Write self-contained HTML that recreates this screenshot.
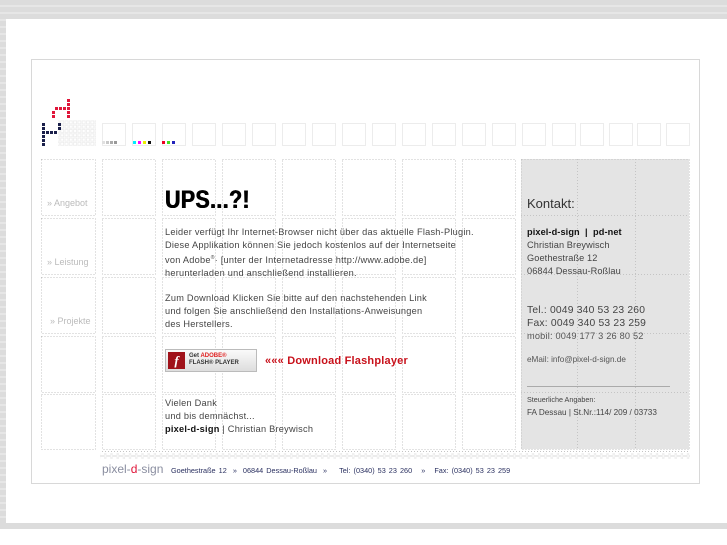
<!DOCTYPE html>
<html><head><meta charset="utf-8"><style>
body{margin:0;width:727px;height:545px;overflow:hidden;background:#fff;font-family:"Liberation Sans",sans-serif;position:relative}
.a{position:absolute;white-space:nowrap}
.t{font-size:9.2px;letter-spacing:0.25px;color:#444;line-height:13px}
</style></head><body>
<div class="a" style="left:0;top:0;width:727px;height:19px;background:repeating-linear-gradient(#dcdcdc 0 5px,#e6e6e6 5px 7px)"></div>
<div class="a" style="left:0;top:0;width:6px;height:523px;background:repeating-linear-gradient(#dcdcdc 0 5px,#e6e6e6 5px 7px)"></div>
<div class="a" style="left:0;top:523px;width:727px;height:6px;background:#dcdcdc"></div>
<div class="a" style="left:31px;top:59px;width:667px;height:423px;border:1px solid #d8d8d8"></div>
<div class="a" style="left:521px;top:159px;width:168px;height:290px;background:#e4e4e4"></div>
<svg class="a" style="left:0;top:0" width="727" height="545">
<g fill="none" stroke="#c4c4c4" stroke-dasharray="1 2">
<rect x="41.5" y="159.5" width="54" height="56"/><rect x="41.5" y="218.5" width="54" height="56"/><rect x="41.5" y="277.5" width="54" height="56"/><rect x="41.5" y="336.5" width="54" height="56"/><rect x="41.5" y="394.5" width="54" height="55"/>
<g id="c"><rect x="102.5" y="159.5" width="53" height="56"/><rect x="102.5" y="218.5" width="53" height="56"/><rect x="102.5" y="277.5" width="53" height="56"/><rect x="102.5" y="336.5" width="53" height="56"/><rect x="102.5" y="394.5" width="53" height="55"/></g>
<use href="#c" x="60"/><use href="#c" x="120"/><use href="#c" x="180"/><use href="#c" x="240"/><use href="#c" x="300"/><use href="#c" x="360"/>
<rect x="521.5" y="159.5" width="168" height="290"/>
<line x1="577.5" y1="159" x2="577.5" y2="449"/><line x1="635.5" y1="159" x2="635.5" y2="449"/>
<line x1="521" y1="215.5" x2="689" y2="215.5"/><line x1="521" y1="274.5" x2="689" y2="274.5"/><line x1="521" y1="333.5" x2="689" y2="333.5"/><line x1="521" y1="392.5" x2="689" y2="392.5"/>
<line x1="102" y1="451.5" x2="689" y2="451.5"/>
</g>
<g fill="none" stroke="#ececec">
<rect x="102.5" y="123.5" width="23" height="22"/><g id="s"><rect x="132.5" y="123.5" width="23" height="22"/></g>
<use href="#s" x="30"/><use href="#s" x="60"/><use href="#s" x="90"/><use href="#s" x="120"/><use href="#s" x="150"/><use href="#s" x="180"/><use href="#s" x="210"/><use href="#s" x="240"/><use href="#s" x="270"/><use href="#s" x="300"/><use href="#s" x="330"/><use href="#s" x="360"/><use href="#s" x="390"/><use href="#s" x="420"/><use href="#s" x="448"/><use href="#s" x="477"/><use href="#s" x="505"/><use href="#s" x="534"/>
</g>
<g>
<rect x="102" y="141" width="3" height="3" fill="#e0e0e0"/><rect x="106" y="141" width="3" height="3" fill="#c8c8c8"/><rect x="110" y="141" width="3" height="3" fill="#aaa"/><rect x="114" y="141" width="3" height="3" fill="#999"/>
<rect x="133" y="141" width="3" height="3" fill="#0ef"/><rect x="138" y="141" width="3" height="3" fill="#f0f"/><rect x="143" y="141" width="3" height="3" fill="#ee0"/><rect x="148" y="141" width="3" height="3" fill="#111"/>
<rect x="162" y="141" width="3" height="3" fill="#e02"/><rect x="167" y="141" width="3" height="3" fill="#4d2"/><rect x="172" y="141" width="3" height="3" fill="#22b"/>
</g>
<defs><pattern id="gp" width="4.3" height="4.3" patternUnits="userSpaceOnUse"><rect x="0.5" y="0.5" width="3" height="3" fill="none" stroke="#ececec" stroke-width="0.8"/></pattern>
<pattern id="fp" width="6.2" height="6" patternUnits="userSpaceOnUse"><rect x="0.5" y="0.5" width="5" height="5" rx="1" fill="none" stroke="#ececec"/></pattern></defs>
<rect x="58" y="120" width="38" height="26" fill="url(#gp)"/>
<rect x="100" y="453" width="590" height="6" fill="url(#fp)"/>
<g fill="#e0163a">
<rect x="67" y="99" width="3" height="3"/><rect x="67" y="103" width="3" height="3"/><rect x="67" y="107" width="3" height="3"/><rect x="67" y="111" width="3" height="3"/><rect x="67" y="115" width="3" height="3"/>
<rect x="63" y="107" width="3" height="3"/><rect x="59" y="107" width="3" height="3"/><rect x="55" y="107" width="3" height="3"/><rect x="52" y="111" width="3" height="3"/><rect x="52" y="115" width="3" height="3"/>
</g>
<g fill="#1a1f4a">
<rect x="42" y="123" width="3" height="3"/><rect x="42" y="127" width="3" height="3"/><rect x="42" y="131" width="3" height="3"/><rect x="42" y="135" width="3" height="3"/><rect x="42" y="139" width="3" height="3"/><rect x="42" y="143" width="3" height="3"/>
<rect x="46" y="131" width="3" height="3"/><rect x="50" y="131" width="3" height="3"/><rect x="54" y="131" width="3" height="3"/><rect x="58" y="127" width="3" height="3"/><rect x="58" y="123" width="3" height="3"/>
</g>
</svg>
<div class="a" style="left:47px;top:198px;font-size:9px;color:#bbb">» Angebot</div>
<div class="a" style="left:47px;top:257px;font-size:9px;color:#bbb">» Leistung</div>
<div class="a" style="left:50px;top:316px;font-size:9px;color:#bbb">» Projekte</div>
<div class="a" style="left:165px;top:186px;font-size:25px;font-weight:bold;color:#000;letter-spacing:0.5px;transform:scaleX(0.85);transform-origin:left;text-shadow:0.6px 0 0 #000,-0.3px 0 0 #000">UPS...?!</div>
<div class="a t" style="left:165px;top:226px">Leider verfügt Ihr Internet-Browser nicht über das aktuelle Flash-Plugin.<br>Diese Applikation können Sie jedoch kostenlos auf der Internetseite<br>von Adobe<sup style="font-size:5px">®</sup>· [unter der Internetadresse http://www.adobe.de]<br>herunterladen und anschließend installieren.</div>
<div class="a t" style="left:165px;top:292px">Zum Download Klicken Sie bitte auf den nachstehenden Link<br>und folgen Sie anschließend den Installations-Anweisungen<br>des Herstellers.</div>
<div class="a" style="left:165px;top:349px;width:90px;height:21px;border:1px solid #bbb;background:linear-gradient(#fafafa,#ddd)">
<div class="a" style="left:2px;top:2px;width:17px;height:17px;background:#a0121a;color:#fff;font:italic bold 13px 'Liberation Serif',serif;text-align:center;line-height:17px">f</div>
<div class="a" style="left:23px;top:3px;font-size:6px;font-weight:bold;color:#333;line-height:7px">Get <span style="color:#e02020">ADOBE®</span><br>FLASH® PLAYER</div></div>
<div class="a" style="left:265px;top:355px;font-size:11px;font-weight:bold;color:#c8101a;letter-spacing:0.2px">««« Download Flashplayer</div>
<div class="a t" style="left:165px;top:397px">Vielen Dank<br>und bis demnächst...<br><b style="color:#111">pixel-d-sign</b> | Christian Breywisch</div>
<div class="a" style="left:527px;top:196px;font-size:13px;color:#333">Kontakt:</div>
<div class="a t" style="left:527px;top:226px;letter-spacing:0.1px"><b style="color:#111">pixel-d-sign &nbsp;|&nbsp; pd-net</b><br>Christian Breywisch<br>Goethestraße 12<br>06844 Dessau-Roßlau</div>
<div class="a t" style="left:527px;top:304px;font-size:10.3px;letter-spacing:0.2px">Tel.: 0049 340 53 23 260<br>Fax: 0049 340 53 23 259</div>
<div class="a" style="left:527px;top:331px;font-size:9.2px;color:#555;letter-spacing:0.2px">mobil: 0049 177 3 26 80 52</div>
<div class="a" style="left:527px;top:355px;font-size:8.2px;color:#555">eMail: info@pixel-d-sign.de</div>
<div class="a" style="left:527px;top:386px;width:143px;border-top:1px solid #aaa"></div>
<div class="a" style="left:527px;top:395px;font-size:7.2px;color:#444">Steuerliche Angaben:</div>
<div class="a" style="left:527px;top:408px;font-size:8.2px;color:#444">FA Dessau | St.Nr.:114/ 209 / 03733</div>
<div class="a" style="left:102px;top:462px;font-size:12px;color:#8a8ea0">pixel-<span style="color:#e0163a">d</span>-sign</div>
<div class="a" style="left:171px;top:466px;font-size:7.3px;color:#2a3060;word-spacing:1px">Goethestraße 12 &nbsp;» &nbsp;06844 Dessau-Roßlau &nbsp;» &nbsp;&nbsp;&nbsp;Tel: (0340) 53 23 260 &nbsp;&nbsp;» &nbsp;&nbsp;Fax: (0340) 53 23 259</div>
</body></html>
